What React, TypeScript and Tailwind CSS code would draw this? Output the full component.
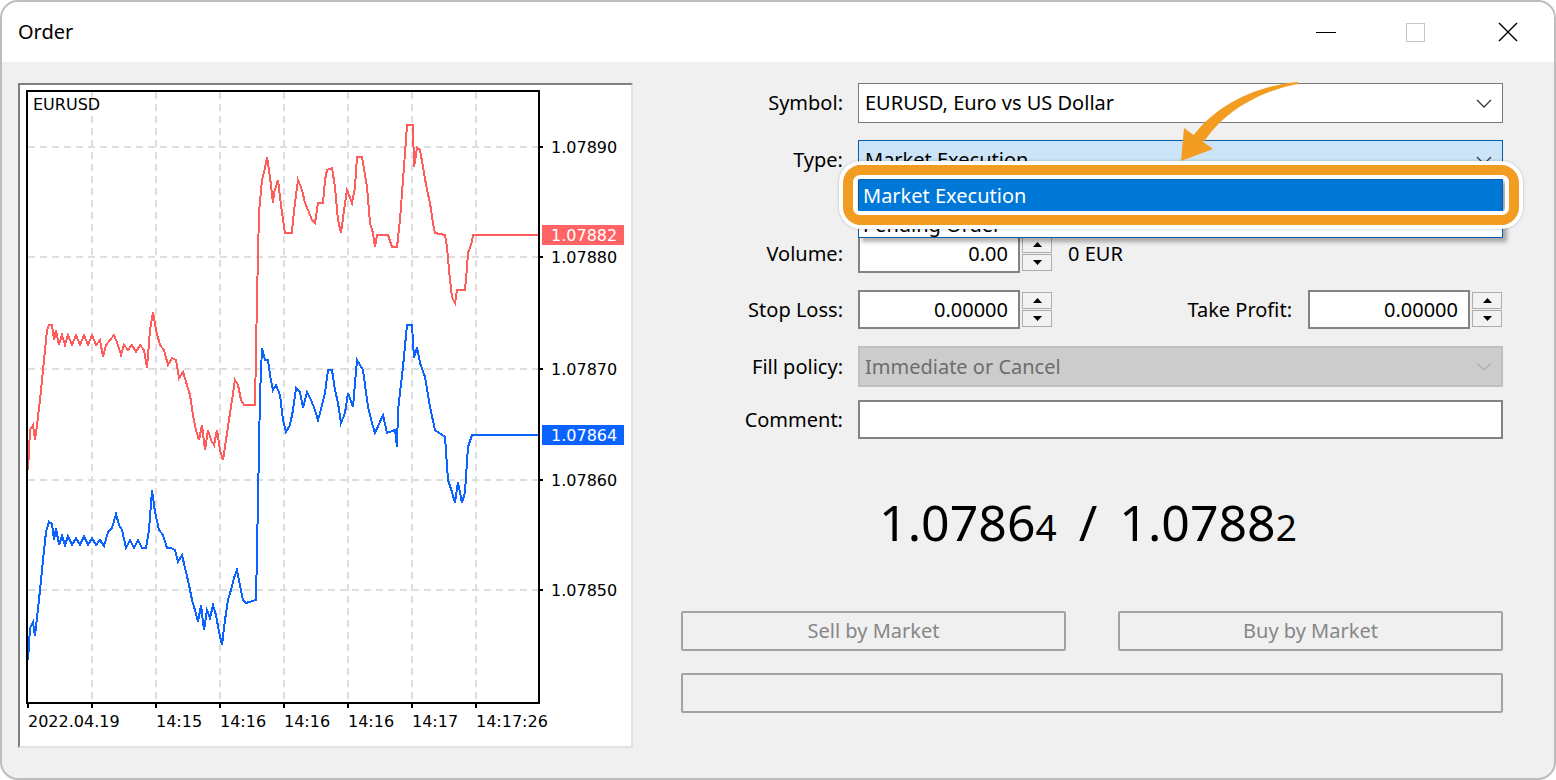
import React from 'react'

const ASK =
  '28,470 30,430 33,425 35,440 37,425 40,400 43,370 45,350 47,330 49,325 52,325 54,340 56,330 59,345 62,335 65,345 68,335 72,345 76,335 80,345 84,335 88,345 92,335 96,345 100,340 103,357 106,345 110,340 114,335 118,345 121,355 124,345 128,350 132,345 136,352 140,345 144,350 147,368 150,330 153,312 156,330 160,345 164,350 168,365 172,358 176,360 179,378 183,372 187,385 190,395 193,415 196,430 199,440 202,425 205,450 208,430 211,440 214,445 217,430 220,450 223,460 226,440 229,420 232,400 235,380 238,385 241,400 244,405 255,405 257,297 259,213 262,180 265,168 267,157 270,177 273,203 274,193 278,180 280,197 283,220 285,233 292,233 293,220 295,203 298,180 302,190 305,203 308,210 312,220 315,223 318,203 323,203 325,180 327,170 332,168 335,187 338,220 341,233 345,203 347,190 352,203 355,187 357,157 362,157 367,187 370,223 373,233 375,247 377,235 388,235 392,247 397,247 400,220 402,193 405,153 407,125 413,125 414,167 417,148 420,150 423,167 427,190 430,203 433,223 435,233 445,235 447,247 450,280 452,297 455,303 457,290 465,290 467,268 468,253 472,242 473,235 539,235'

const BID =
  '28,660 30,628 33,622 35,636 37,618 40,590 43,560 46,532 49,522 52,524 54,540 56,528 59,545 62,536 65,545 68,536 72,545 76,538 80,545 84,536 88,545 92,538 96,545 100,540 104,546 108,532 112,528 116,514 119,525 122,530 126,548 130,540 134,548 138,540 142,548 146,548 149,530 152,490 155,512 159,530 163,535 167,548 171,548 175,550 178,562 182,555 186,572 189,585 192,600 195,610 198,622 201,605 204,630 207,610 210,618 213,605 216,615 219,632 222,645 225,620 228,600 231,590 234,578 237,570 240,585 243,600 246,603 256,600 258,500 260,395 262,348 265,360 268,360 270,375 273,390 276,385 280,395 283,420 286,432 290,425 293,410 296,388 300,392 303,408 307,392 311,400 315,410 318,420 320,413 325,393 328,370 332,370 335,390 338,403 341,423 345,413 348,393 353,407 357,360 363,370 368,407 372,423 375,433 383,415 387,433 395,430 397,447 398,410 403,367 407,325 412,325 414,358 417,347 420,363 425,377 430,407 435,430 445,437 448,480 452,492 455,503 458,482 462,503 465,492 468,447 472,435 539,435'

const gridX = [92, 156, 220, 284, 348, 412, 476]
const gridY = [147, 257, 369, 480, 590]
const prices = ['1.07890', '1.07880', '1.07870', '1.07860', '1.07850']
const times: [number, string][] = [
  [28, '2022.04.19'],
  [156, '14:15'],
  [220, '14:16'],
  [284, '14:16'],
  [348, '14:16'],
  [412, '14:17'],
  [476, '14:17:26'],
]

function Chart() {
  return (
    <svg width="611" height="661" viewBox="20 85 611 661" className="block" fontFamily="'DejaVu Sans', sans-serif" fontSize="16">
      {gridX.map((x) => (
        <line key={x} x1={x} y1={92} x2={x} y2={702} stroke="#dedede" strokeWidth="2" strokeDasharray="7 5" />
      ))}
      {gridY.map((y) => (
        <line key={y} x1={28} y1={y} x2={538} y2={y} stroke="#dedede" strokeWidth="2" strokeDasharray="7 5" />
      ))}
      <polyline points={ASK} fill="none" stroke="#ff5c5c" strokeWidth="2" strokeLinejoin="miter" shapeRendering="crispEdges" />
      <polyline points={BID} fill="none" stroke="#0b63ff" strokeWidth="2" strokeLinejoin="miter" shapeRendering="crispEdges" />
      <rect x="27" y="91" width="512" height="612" fill="none" stroke="#000" strokeWidth="2" />

      <text x="33" y="110" fill="#000">EURUSD</text>

      {gridY.map((y, i) => (
        <g key={y}>
          <line x1={539} y1={y} x2={543} y2={y} stroke="#000" strokeWidth="2" />
          <text x="551" y={y + 6} fill="#000">{prices[i]}</text>
        </g>
      ))}
      {[28, ...gridX].map((x) => (
        <line key={x} x1={x} y1={703} x2={x} y2={708} stroke="#000" strokeWidth="2" />
      ))}
      {times.map(([x, t], i) => (
        <text key={i} x={x} y={727} fill="#000">{t}</text>
      ))}

      <rect x="542" y="225" width="82" height="20" fill="#ff6363" />
      <text x="551" y="241" fill="#fff">1.07882</text>
      <rect x="542" y="425" width="82" height="20" fill="#0b63ff" />
      <text x="551" y="441" fill="#fff">1.07864</text>
    </svg>
  )
}

function Chevron({ color = '#3a3a3a' }: { color?: string }) {
  return (
    <svg width="16" height="9" viewBox="0 0 16 9">
      <path d="M1 1l7 7 7-7" fill="none" stroke={color} strokeWidth="1.3" />
    </svg>
  )
}

function Spinner() {
  return (
    <div className="ml-[2px] flex h-[35px] w-[30px] flex-col gap-px">
      <div className="flex flex-1 items-center justify-center border border-[#adadad] bg-[#f2f2f2]">
        <svg width="9" height="5" viewBox="0 0 9 5">
          <path d="M4.5 0L9 5H0z" fill="#000" />
        </svg>
      </div>
      <div className="flex flex-1 items-center justify-center border border-[#adadad] bg-[#f2f2f2]">
        <svg width="9" height="5" viewBox="0 0 9 5">
          <path d="M0 0h9L4.5 5z" fill="#000" />
        </svg>
      </div>
    </div>
  )
}

function NumInput({ value }: { value: string }) {
  return (
    <div className="flex h-full w-[162px] items-center justify-end border-2 border-[#838383] bg-white pr-[10px]">
      {value}
    </div>
  )
}

function Row({ label, className, children }: { label: string; className: string; children: React.ReactNode }) {
  return (
    <div className={`flex items-center ${className}`}>
      <div className="w-[162px] text-right">{label}</div>
      <div className="ml-[15px] flex h-full flex-1 items-center">{children}</div>
    </div>
  )
}

export default function App() {
  return (
    <div className="h-[780px] w-[1556px] bg-white text-[20px] text-black" style={{ fontFamily: "'Noto Sans', 'Open Sans', sans-serif" }}>
      <div className="flex h-[780px] w-[1556px] flex-col overflow-hidden rounded-[18px] border-2 border-[#bdbdbd] bg-[#f0f0f0]">
        {/* Title bar */}
        <div className="flex h-[60px] items-center bg-white pl-[16px] pr-[36px]">
          <span>Order</span>
          <div className="ml-auto flex items-center">
            <div className="h-px w-[20px] bg-black" />
            <div className="ml-[70px] h-[19px] w-[19px] border border-[#c6c6c6]" />
            <svg className="ml-[73px]" width="20" height="20" viewBox="0 0 20 20">
              <path d="M1 1L19 19M19 1L1 19" stroke="#000" strokeWidth="1.4" />
            </svg>
          </div>
        </div>

        {/* Body */}
        <div className="flex flex-1 pl-[16px] pt-[21px]">
          <div className="h-[665px] w-[615px] border-2 border-b-[#e2e2e2] border-l-[#808080] border-r-[#e2e2e2] border-t-[#808080] bg-white">
            <Chart />
          </div>

          <div className="ml-[48px] flex w-[822px] flex-col">
            <Row label="Symbol:" className="h-[40px]">
              <div className="flex h-full w-[645px] items-center justify-between border border-[#7a7a7a] bg-white pl-[6px] pr-[10px]">
                <span>EURUSD, Euro vs US Dollar</span>
                <Chevron />
              </div>
            </Row>

            <Row label="Type:" className="mt-[17px] h-[40px]">
              <div className="relative flex h-full w-[645px] items-center justify-between border border-[#0b5cab] bg-[#cce4f7] pl-[6px] pr-[10px]">
                <span>Market Execution</span>
                <Chevron />

                {/* open list */}
                <div className="absolute left-[-1px] top-[38px] z-10 flex w-[645px] flex-col border border-[#0b5cab] bg-white shadow-[4px_4px_4px_rgba(0,0,0,0.3)]">
                  <div className="flex h-[32px] items-center bg-[#0078d7] pl-[4px] text-white">Market Execution</div>
                  <div className="flex h-[25px] items-center pl-[4px]">Pending Order</div>
                </div>

                {/* highlight ring */}
                <div className="absolute left-[-20px] top-[20px] z-20 h-[68px] w-[684px] rounded-[22px] border-[4px] border-white shadow-[0_0_3px_rgba(0,0,0,0.25)]">
                  <div className="h-full w-full rounded-[18px] border-[10px] border-[#f39c22]">
                    <div className="h-full w-full rounded-[7px] border-[4px] border-white" />
                  </div>
                </div>

                {/* arrow */}
                <svg className="absolute left-[311px] top-[-63px] z-30" width="130" height="90" viewBox="1170 78 130 90">
                  <path d="M1298 82C1252 86 1214 108 1193 136L1204 142C1222 114 1256 92 1298 84Z" fill="#f39c22" />
                  <polygon points="1181,161 1184,128 1213,149" fill="#f39c22" />
                </svg>
              </div>
            </Row>

            <Row label="Volume:" className="mt-[54px] h-[39px]">
              <NumInput value="0.00" />
              <Spinner />
              <span className="ml-[16px]">0 EUR</span>
            </Row>

            <Row label="Stop Loss:" className="mt-[17px] h-[39px]">
              <NumInput value="0.00000" />
              <Spinner />
              <span className="ml-auto">Take Profit:</span>
              <div className="ml-[16px] h-full">
                <NumInput value="0.00000" />
              </div>
              <Spinner />
              <div className="w-px" />
            </Row>

            <Row label="Fill policy:" className="mt-[17px] h-[41px]">
              <div className="flex h-full w-[645px] items-center justify-between border-2 border-[#bfbfbf] bg-[#cccccc] pl-[5px] pr-[9px] text-[#6d6d6d]">
                <span>Immediate or Cancel</span>
                <Chevron color="#b0b0b0" />
              </div>
            </Row>

            <Row label="Comment:" className="mt-[13px] h-[39px]">
              <div className="h-full w-[645px] border-2 border-[#838383] bg-white" />
            </Row>

            <div className="mt-[53px] flex h-[60px] items-center justify-center leading-none">
              <span className="ml-[-8px] text-[50px]">
                1.0786<span className="text-[37px]">4</span>
                <span className="mx-[22px]">/</span>
                1.0788<span className="text-[37px]">2</span>
              </span>
            </div>

            <div className="mt-[59px] grid h-[40px] grid-cols-2 gap-[52px]">
              <div className="flex items-center justify-center rounded-[2px] border-2 border-[#a3a3a3] text-[#878787]">Sell by Market</div>
              <div className="flex items-center justify-center rounded-[2px] border-2 border-[#a3a3a3] text-[#878787]">Buy by Market</div>
            </div>
            <div className="mt-[22px] h-[40px] rounded-[2px] border-2 border-[#a3a3a3]" />
          </div>
        </div>
      </div>
    </div>
  )
}
